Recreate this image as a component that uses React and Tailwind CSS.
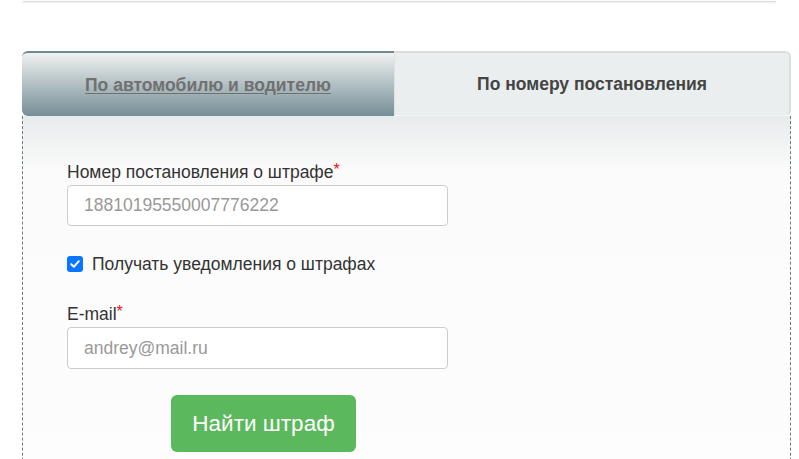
export default function App() {
  return (
    <div className="w-[799px] h-[459px] overflow-hidden bg-white" style={{ fontFamily: '"Liberation Sans", Arial, sans-serif' }}>
      <div className="mx-[23px] h-[2px] border-b border-[#dcdcdc] shadow-[0_1px_2px_rgba(0,0,0,0.08)]"></div>
      <div className="ml-[22px] w-[769px] mt-[49px]">
        <div className="flex h-[65px]">
          <div className="w-[372px] flex items-center justify-center rounded-l-[6px] border-t-2 border-[#6f8a92] bg-gradient-to-b from-[#f0f2f2] to-[#768f96]">
            <span className="text-[17.5px] font-bold text-[#707070] underline decoration-1 underline-offset-2 mt-[1px]">По автомобилю и водителю</span>
          </div>
          <div className="flex-1 flex items-center justify-center rounded-r-[6px] border-t-2 border-r-2 border-l border-b border-l-[#e0e0e0] border-[#dcdcdc] border-b-[#f4f4f4] bg-[#eaeeef]">
            <span className="text-[17.5px] font-bold text-[#444]">По номеру постановления</span>
          </div>
        </div>
        <div className="h-[400px] border-l border-r border-dashed border-[#6a7e86] bg-gradient-to-b from-[#e8ebec] via-[#fbfbfb] via-[14%] to-[#fdfdfd] pl-[44px] pt-[46px]">
          <div className="text-[17.5px] leading-[20px] text-[#333]">
            Номер постановления о штрафе<span className="text-[16px] leading-[16px] align-top text-[#ee1111]">*</span>
          </div>
          <div className="mt-[3px] w-[381px] h-[41px] rounded-[4px] border border-[#ccc] bg-white flex items-center pl-[16px] text-[17.5px] text-[#999]">
            18810195550007776222
          </div>
          <label className="mt-[28px] flex items-center h-[20px]">
            <span className="w-[16px] h-[16px] rounded-[3px] bg-[#0a75ff] flex items-center justify-center">
              <svg width="12" height="12" viewBox="0 0 12 12"><path d="M2.2 6.2 L4.8 8.8 L9.8 3.2" fill="none" stroke="white" strokeWidth="2" strokeLinecap="round" strokeLinejoin="round" /></svg>
            </span>
            <span className="ml-[9px] text-[17.5px] text-[#333]">Получать уведомления о штрафах</span>
          </label>
          <div className="mt-[30px] text-[17.5px] leading-[20px] text-[#333]">
            E-mail<span className="text-[16px] leading-[16px] align-top text-[#ee1111]">*</span>
          </div>
          <div className="mt-[3px] w-[381px] h-[42px] rounded-[4px] border border-[#ccc] bg-white flex items-center pl-[16px] text-[17.5px] text-[#999]">
            andrey@mail.ru
          </div>
          <div className="mt-[26px] ml-[104px] w-[185px] h-[57px] rounded-[6px] bg-[#5cb85c] flex items-center justify-center text-white text-[22.5px]">
            Найти штраф
          </div>
        </div>
      </div>
    </div>
  );
}
